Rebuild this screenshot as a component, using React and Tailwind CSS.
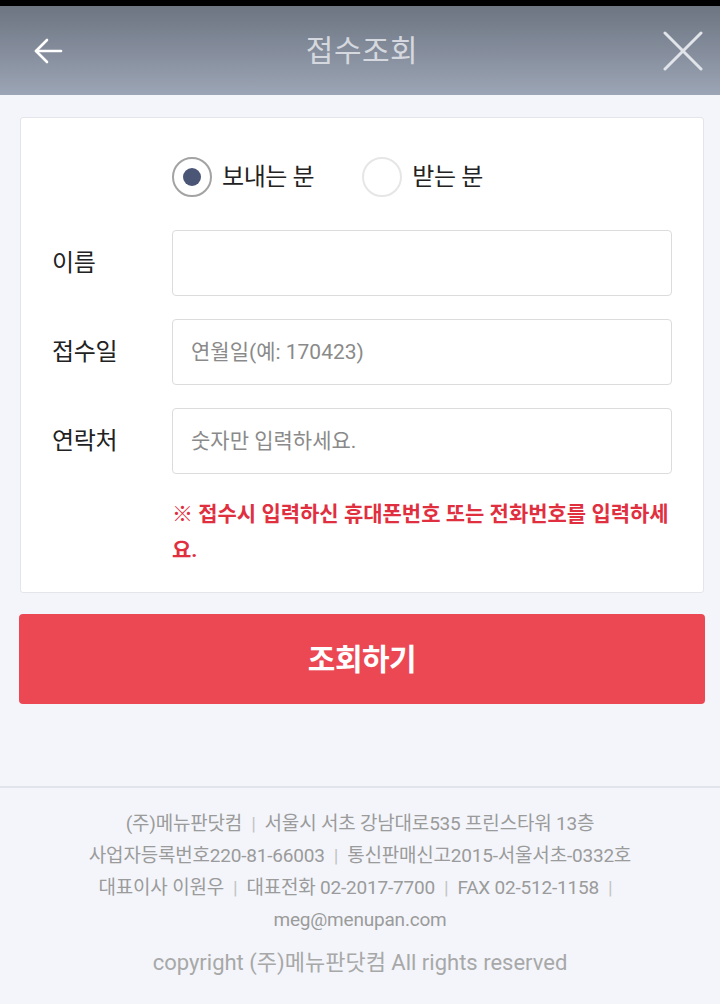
import { useState } from "react";

const font = { fontFamily: 'Roboto, "Noto Sans CJK KR", sans-serif' };

const Radio = ({ checked, label, onClick }) => (
    <button type="button" onClick={onClick} className="flex items-center gap-[10px]">
        <span
            className={
                "w-10 h-10 rounded-full border-2 flex items-center justify-center bg-white " +
                (checked ? "border-[#a3a3a3]" : "border-[#e6e6e6]")
            }
        >
            {checked && <span className="w-[18px] h-[18px] rounded-full bg-[#4b5576]" />}
        </span>
        <span className="text-[24px] leading-none text-[#222] tracking-[-0.4px]">{label}</span>
    </button>
);

const Field = ({ label, placeholder }) => (
    <div className="grid grid-cols-[120px_1fr] items-center">
        <span className="text-[24px] text-[#222] tracking-[-0.3px]">{label}</span>
        <input
            className="h-[66px] w-full rounded-[4px] border border-[#dcdcdc] bg-white px-[18px] text-[21px] text-[#333] placeholder-[#8a8a8a] outline-none"
            placeholder={placeholder}
        />
    </div>
);

const Sep = () => <span className="mx-[9px] text-[#c4c4c4]">|</span>;

const App = () => {
    const [who, setWho] = useState("sender");

    return (
        <div className="min-h-[1004px] bg-[#f3f5fa] flex flex-col" style={font}>
            <div className="h-[6px] bg-black" />
            <header className="h-[89px] bg-linear-to-b from-[#6d7582] to-[#9ca5b5] grid grid-cols-[1fr_auto_1fr] items-center pl-[33px] pr-[17px]">
                <svg width="30" height="28" viewBox="0 0 30 28" fill="none" stroke="#ffffff" strokeWidth="2.6" strokeLinecap="round" strokeLinejoin="round">
                    <path d="M28 14H3" />
                    <path d="M14 3L3 14l11 11" />
                </svg>
                <h1 className="text-[30px] font-normal text-[#d5d9df] tracking-[0.5px] mr-[12px]">접수조회</h1>
                <svg className="justify-self-end" width="40" height="40" viewBox="0 0 40 40" fill="none" stroke="#e1e4e9" strokeWidth="3" strokeLinecap="round">
                    <path d="M2 2l36 36" />
                    <path d="M38 2L2 38" />
                </svg>
            </header>

            <main className="pl-[19px] pr-[15px] pt-[22px]">
                <div className="mx-px bg-white border border-[#e3e5ea] rounded-[3px] pt-[39px] pb-[24px] px-[31px]">
                    <div className="flex gap-[48px] pl-[120px]">
                        <Radio checked={who === "sender"} label="보내는 분" onClick={() => setWho("sender")} />
                        <Radio checked={who === "receiver"} label="받는 분" onClick={() => setWho("receiver")} />
                    </div>

                    <div className="mt-[33px] flex flex-col gap-[23px]">
                        <Field label="이름" placeholder="" />
                        <Field label="접수일" placeholder="연월일(예: 170423)" />
                        <Field label="연락처" placeholder="숫자만 입력하세요." />
                    </div>

                    <p className="mt-[22px] pl-[120px] text-[21px] leading-[36px] font-bold text-[#e0303f]">
                        ※ 접수시 입력하신 휴대폰번호 또는 전화번호를 입력하세요.
                    </p>
                </div>

                <button className="mt-[21px] w-full h-[90px] rounded-[4px] bg-[#ec4854] text-white text-[30px] font-bold tracking-[-0.5px]">
                    조회하기
                </button>
            </main>

            <footer className="mt-[82px] flex-1 border-t-2 border-[#e1e4ea] pt-[20px] pb-[24px] text-center">
                <div className="text-[19px] leading-[32px] text-[#9b9b9b] tracking-[-0.2px]">
                    <p>
                        (주)메뉴판닷컴<Sep />서울시 서초 강남대로535 프린스타워 13층
                    </p>
                    <p>
                        사업자등록번호220-81-66003<Sep />통신판매신고2015-서울서초-0332호
                    </p>
                    <p>
                        대표이사 이원우<Sep />대표전화 02-2017-7700<Sep />FAX 02-512-1158<Sep />
                    </p>
                    <p>meg@menupan.com</p>
                </div>
                <p className="mt-[11px] text-[22px] leading-[32px] text-[#a8a8a8]">
                    copyright (주)메뉴판닷컴 All rights reserved
                </p>
            </footer>
        </div>
    );
};

export default App;
